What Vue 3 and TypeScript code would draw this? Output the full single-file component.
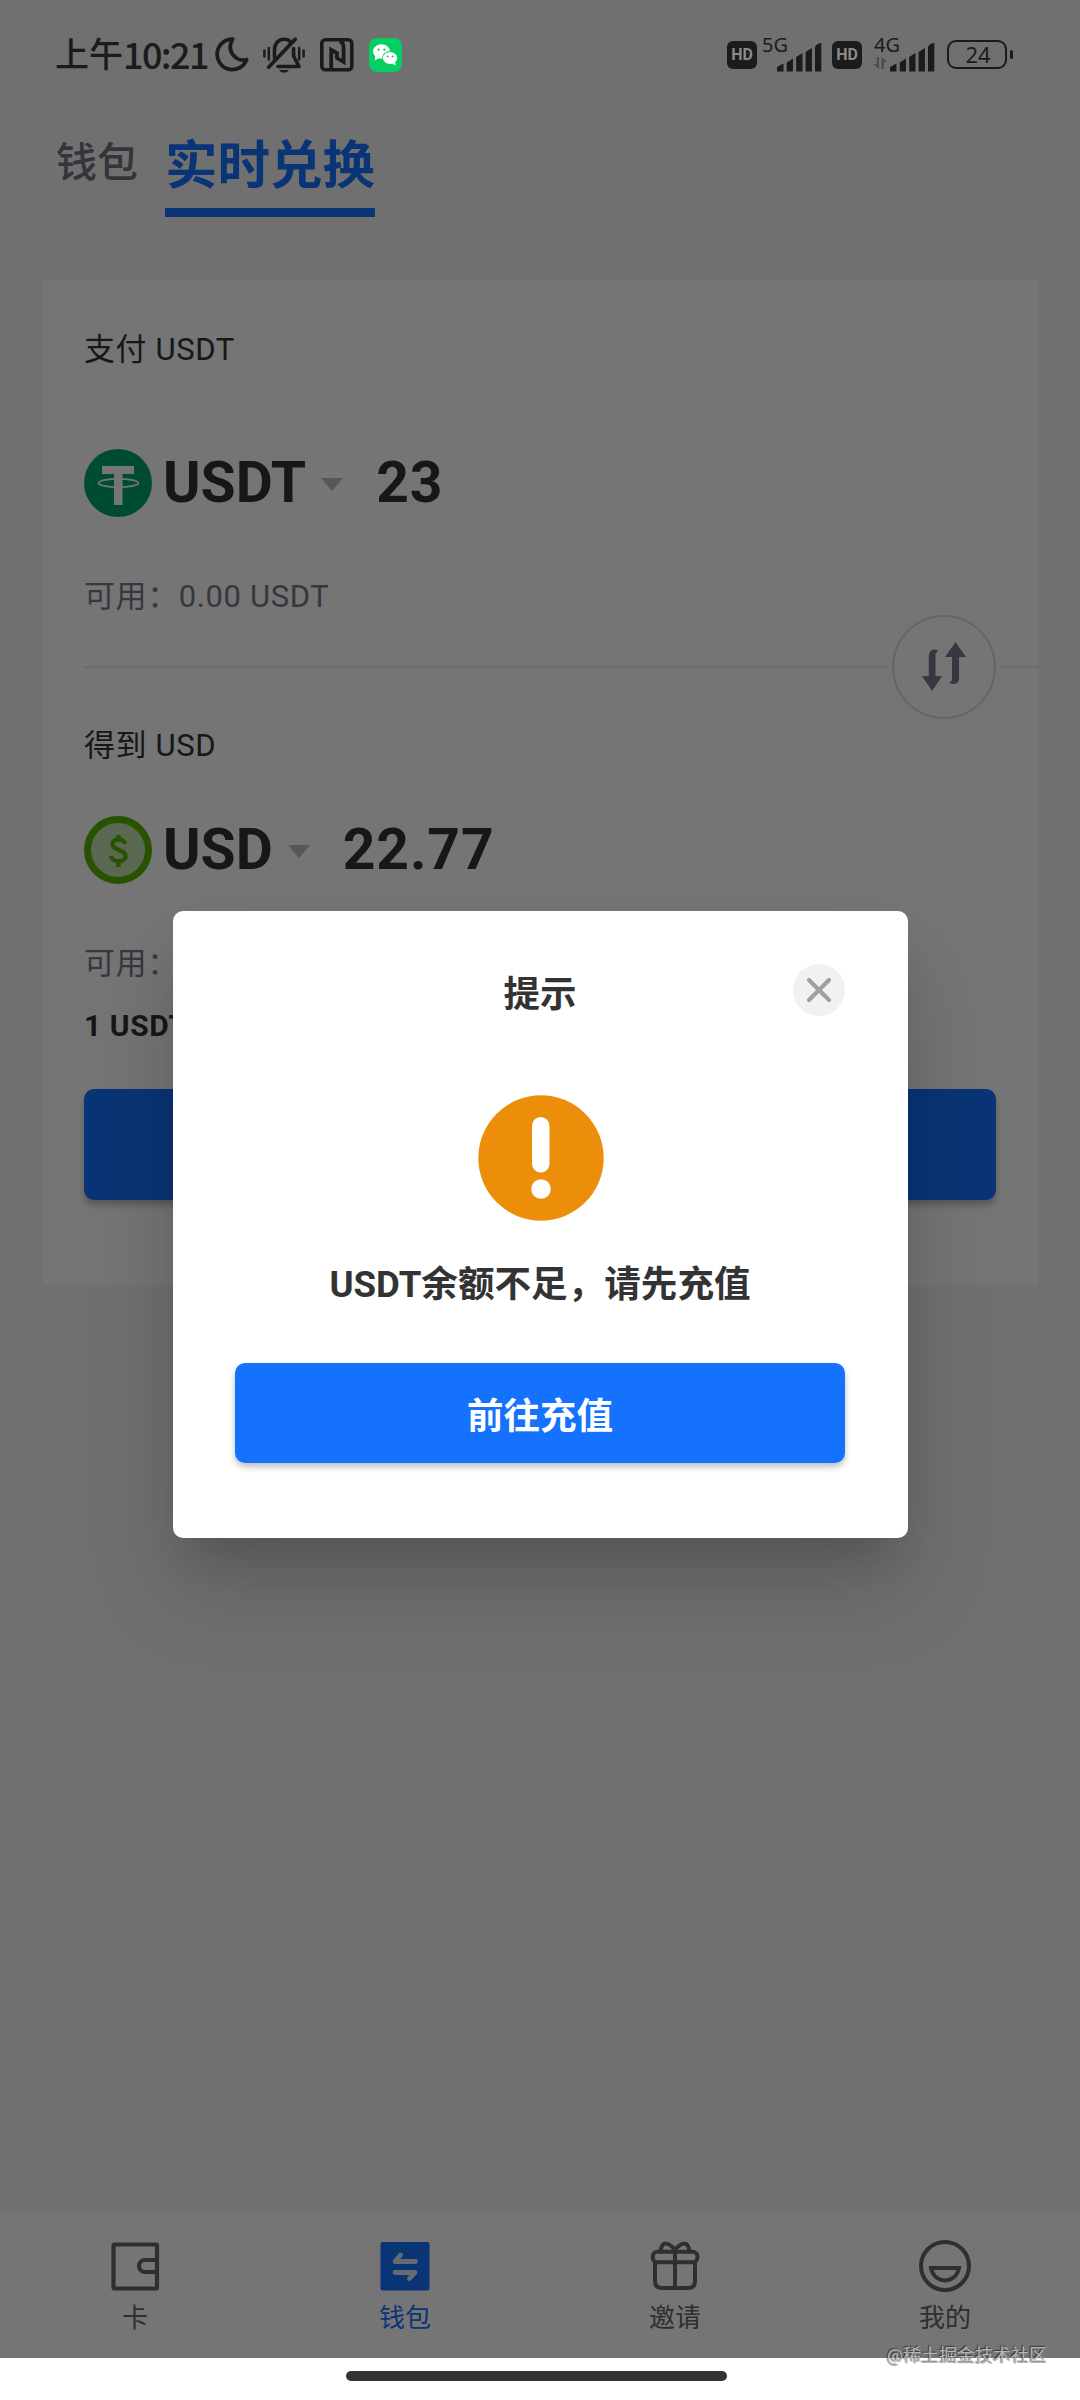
<script setup lang="ts">
import { ref } from 'vue'

type NavIcon = 'card' | 'wallet' | 'gift' | 'mine'

interface NavItem {
  icon: NavIcon
  label: string
}

const navItems: NavItem[] = [
  { icon: 'card', label: '卡' },
  { icon: 'wallet', label: '钱包' },
  { icon: 'gift', label: '邀请' },
  { icon: 'mine', label: '我的' },
]

const activeNav = ref<NavIcon>('wallet')
const dialogOpen = ref(true)
</script>

<template>
  <div class="screen">
    <header class="status">
      <div class="status-left">
        <span class="clock"><span class="clock-cjk">上午</span><span class="clock-num">10:21</span></span>
        <svg class="moon" width="34" height="36" viewBox="0 0 34 36">
          <path d="M17.6 2.2 A15.2 15.2 0 1 0 31.6 22.6 C22 25.5 10.5 15 17.6 2.2 Z" fill="none" stroke="#1b1b1b" stroke-width="3.8" stroke-linejoin="round" />
        </svg>
        <svg class="bell" width="42" height="38" viewBox="0 0 42 38" fill="none" stroke="#1b1b1b" stroke-linecap="round">
          <path d="M11.5 22 V14 C11.5 7 16 3.3 21 3.3 C24 3.3 26.5 4.6 28 6.2 M30.6 12.5 V20 L36 30.5 H15" stroke-width="3.6" stroke-linejoin="round" />
          <path d="M5.8 31 L32.2 3.2" stroke-width="3.8" />
          <path d="M1.4 14.5 V20.5 M5.8 12 V23.5 M36.2 12 V23.5 M40.6 14.5 V20.5" stroke-width="2.5" />
          <path d="M16 34 H26 C24 37.4 18 37.4 16 34 Z" fill="#1b1b1b" stroke="none" />
        </svg>
        <svg class="nfc" width="34" height="34" viewBox="0 0 34 34" fill="none" stroke="#1b1b1b">
          <rect x="1.8" y="1.8" width="30" height="30" rx="3.5" stroke-width="3.6" />
          <path d="M11.2 31 V11.8 L17 15.2 V20 L23.6 24 V10 Q23.6 4 19.5 3.5" stroke-width="3.8" stroke-linejoin="miter" />
        </svg>
        <svg class="wechat" width="33" height="34" viewBox="0 0 33 34">
          <rect width="33" height="34" rx="8" fill="#05cf62" />
          <ellipse cx="12.5" cy="13.5" rx="8.4" ry="7.3" fill="#fff" />
          <path d="M6.5 17 L5.8 22.5 L11 19.5 Z" fill="#fff" />
          <ellipse cx="21" cy="20" rx="8" ry="7" fill="#05cf62" />
          <ellipse cx="21" cy="20" rx="7.2" ry="6.1" fill="#fff" />
          <path d="M22 25 L26.7 27.4 L26 22.5 Z" fill="#fff" />
          <g fill="#05b758">
            <circle cx="9.6" cy="11.6" r="1.1" /><circle cx="15.4" cy="11.6" r="1.1" />
            <circle cx="18.6" cy="18.4" r=".9" /><circle cx="23.6" cy="18.4" r=".9" />
          </g>
        </svg>
      </div>
      <div class="status-right">
        <span class="hd">HD</span>
        <div class="signal first">
          <span class="net">5G</span>
          <svg class="bars" width="46" height="30" viewBox="0 0 46 30" fill="#1b1b1b">
            <path d="M0 25 L6.5 21.5 V29.5 H0Z M9.7 20.5 L16 16.5 V29.5 H9.7Z M19.2 15 L25.5 11 V29.5 H19.2Z M28.6 10 L34.9 6 V29.5 H28.6Z M38 5 Q39 2 44.3 .8 V29.5 H38Z" />
          </svg>
        </div>
        <span class="hd">HD</span>
        <div class="signal second">
          <span class="net">4G</span>
          <svg class="updown" width="15" height="12" viewBox="0 0 15 12" fill="#4c4c4c">
            <path d="M6 0 V12 L.5 7 H3.8 V0Z M8.5 12 V0 L14.5 5 H10.8 V12Z" />
          </svg>
          <svg class="bars" width="46" height="30" viewBox="0 0 46 30" fill="#1b1b1b">
            <path d="M0 25 L6.5 21.5 V29.5 H0Z M9.7 20.5 L16 16.5 V29.5 H9.7Z M19.2 15 L25.5 11 V29.5 H19.2Z M28.6 10 L34.9 6 V29.5 H28.6Z M38 5 Q39 2 44.3 .8 V29.5 H38Z" />
          </svg>
        </div>
        <span class="battery">24</span>
        <span class="battery-nub"></span>
      </div>
    </header>

    <main class="page">
      <nav class="tabs">
        <span class="tab">钱包</span>
        <span class="tab active">实时兑换</span>
      </nav>

      <section class="card">
        <div class="line">支付 USDT</div>
        <div class="amount">
          <svg width="68" height="68" viewBox="0 0 68 68">
            <circle cx="34" cy="34" r="34" fill="#00a36f" />
            <path d="M18 17 H50 V25 H38.5 V56 H30 V25 H18 Z" fill="#fff" />
            <ellipse cx="34.5" cy="34" rx="20" ry="4.2" fill="none" stroke="#fff" stroke-width="1.8" />
          </svg>
          <span class="code">USDT</span>
          <span class="caret"></span>
          <span class="value">23</span>
        </div>
        <div class="line muted after-pay">可用：0.00 USDT</div>

        <div class="divider">
          <button class="swap" type="button" aria-label="swap">
            <svg width="44" height="50" viewBox="0 0 44 50" fill="#767b8e">
              <path d="M16 8 Q15 10.5 13.5 12 V34 H20 L10.2 49 L0 34 H6.8 V14 Q6.8 8 12 7.5Z" />
              <path d="M33.5 0 L44 15 H37 V36 Q37 42 31.5 42 Q29 42 27.5 40.5 Q30 39.5 30 37 V15 H23Z" />
            </svg>
          </button>
        </div>

        <div class="line get">得到 USD</div>
        <div class="amount second-amount">
          <svg width="68" height="68" viewBox="0 0 68 68">
            <circle cx="34" cy="34" r="30.5" fill="#c5e3b4" stroke="#56b400" stroke-width="7" />
            <path d="M41 28 C40 22 28 22 28.500 28.500 C29 35 41.500 33 41.500 40 C41.500 47 28 47 27 40 M34.500 19 V24 M34.500 44 V51" fill="none" stroke="#56b400" stroke-width="4.400" />
          </svg>
          <span class="code">USD</span>
          <span class="caret"></span>
          <span class="value">22.77</span>
        </div>
        <div class="line muted after-get">可用：0.00 USD</div>
        <div class="line rate">1 USDT = 0.99 USD</div>
        <button class="primary exchange" type="button">兑换</button>
      </section>
    </main>

    <footer class="nav">
      <div v-for="item in navItems" :key="item.icon" class="nav-item" :class="{ on: item.icon === activeNav }">
        <svg v-if="item.icon === 'card'" width="54" height="54" viewBox="0 0 54 54" fill="none" stroke="currentColor" stroke-width="4.200">
          <rect x="5.500" y="5.500" width="43.500" height="44" rx="1" />
          <path d="M48 21 H37 A6 6 0 0 0 37 33 H48" />
        </svg>
        <svg v-else-if="item.icon === 'wallet'" width="54" height="54" viewBox="0 0 54 54">
          <rect x="2.500" y="3" width="49" height="48.500" rx="2" fill="#1472ff" />
          <path d="M37.500 22.500 H17 L22.500 16 M17 33.500 H37 L31.500 39.500" fill="none" stroke="#dfe9fb" stroke-width="4.800" stroke-linecap="round" stroke-linejoin="round" />
        </svg>
        <svg v-else-if="item.icon === 'gift'" width="54" height="54" viewBox="0 0 54 54" fill="none" stroke="currentColor" stroke-width="4">
          <rect x="4.800" y="12.800" width="44.600" height="10.400" rx="4.500" />
          <path d="M7 23 V42 Q7 49 14 49 H40 Q47 49 47 42 V23 M27 10 V49 M12.500 12.500 C14 1 20 3.500 27 10.500 C34 3.500 40 1 41.500 12.500" />
        </svg>
        <svg v-else width="54" height="54" viewBox="0 0 54 54" fill="none" stroke="currentColor" stroke-width="4">
          <circle cx="27" cy="27" r="24" />
          <path d="M13 29 H41 C38 45.500 16 45.500 13 29 Z" />
        </svg>
        <span>{{ item.label }}</span>
      </div>
    </footer>

    <div v-if="dialogOpen" class="mask">
      <div class="dialog">
        <div class="dialog-head">
          <h2>提示</h2>
          <button class="close" type="button" aria-label="close" @click="dialogOpen = false">
            <svg width="26" height="26" viewBox="0 0 26 26">
              <path d="M3 3 L23 23 M23 3 L3 23" stroke="#a0a0a0" stroke-width="4.200" stroke-linecap="round" />
            </svg>
          </button>
        </div>
        <svg class="warn" width="126" height="126" viewBox="0 0 126 126">
          <circle cx="63" cy="63" r="62.700" fill="#ed8e0b" />
          <rect x="54" y="22" width="17.500" height="55.500" rx="8.700" fill="#fff" />
          <circle cx="63" cy="94" r="9.800" fill="#fff" />
        </svg>
        <p class="message">USDT余额不足，请先充值</p>
        <button class="primary recharge" type="button">前往充值</button>
      </div>
    </div>

    <div class="home"><span class="home-bar"></span></div>
    <span class="watermark">@稀土掘金技术社区</span>
  </div>
</template>

<style>
body {
  margin: 0;
}
</style>

<style scoped>
.screen {
  position: relative;
  width: 1080px;
  height: 2400px;
  display: flex;
  flex-direction: column;
  overflow: hidden;
  background: #f4f4f4;
  color: #333;
  font-family: Roboto, "Noto Sans CJK SC", sans-serif;
}
button {
  border: 0;
  padding: 0;
  font: inherit;
}
svg {
  display: block;
  flex: none;
}
.status {
  position: relative;
  z-index: 2;
  height: 109px;
  box-sizing: border-box;
  padding: 0 67px 0 55px;
  display: flex;
  justify-content: space-between;
  align-items: center;
  color: #1b1b1b;
}
.status-left,
.status-right {
  display: flex;
  align-items: center;
}
.clock {
  display: flex;
  width: 160px;
  font-family: "Noto Sans CJK SC", sans-serif;
  font-weight: 500;
  font-size: 34px;
  line-height: 40px;
  margin-top: -3px;
  white-space: nowrap;
}
.clock-cjk {
  width: 68px;
}
.clock-num {
  font-size: 36px;
  letter-spacing: -1.6px;
}
.bell {
  margin-left: 14px;
}
.nfc {
  margin-left: 15px;
}
.wechat {
  margin-left: 15px;
}
.hd {
  width: 30px;
  height: 28px;
  border-radius: 6px;
  background: #1b1b1b;
  color: #8a8a8a;
  font: 700 16px/28px Roboto, sans-serif;
  text-align: center;
}
.signal {
  position: relative;
  height: 34px;
  display: flex;
  align-items: flex-end;
  justify-content: flex-end;
}
.signal.first {
  width: 66px;
  margin-right: 9px;
}
.signal.second {
  width: 74px;
  margin-right: 11px;
}
.net {
  position: absolute;
  top: -3px;
  left: 5px;
  font: 400 20px/20px "Noto Sans", sans-serif;
}
.second .net {
  left: 12px;
}
.updown {
  margin: 0 2px 3px 0;
}
.battery {
  width: 60px;
  height: 29px;
  box-sizing: border-box;
  border: 2.5px solid #1b1b1b;
  border-radius: 9px;
  font: 400 22px/24px "Noto Sans", sans-serif;
  text-align: center;
  padding-left: 2px;
}
.battery-nub {
  width: 3.5px;
  height: 9px;
  margin-left: 2.5px;
  border-radius: 2px;
  background: #1b1b1b;
}
.page {
  flex: 1;
  padding-top: 14px;
}
.tabs {
  display: flex;
  align-items: flex-start;
  height: 157px;
  padding-left: 56px;
}
.tab {
  font-size: 41px;
  line-height: 80px;
  color: #75717f;
  font-weight: 500;
  margin-right: 27px;
}
.tab.active {
  font-size: 52.5px;
  line-height: 87px;
  height: 85px;
  font-weight: 700;
  color: #1472ff;
  border-bottom: 9px solid #1472ff;
}
.card {
  margin: 0 42px 0 43px;
  padding: 50px 42px 85px 41px;
  background: #fff;
}
.line {
  font-size: 31px;
  line-height: 39px;
  letter-spacing: 0.6px;
  white-space: nowrap;
}
.muted {
  color: #7b7989;
}
.amount {
  display: flex;
  align-items: center;
  height: 68px;
  margin-top: 80px;
  font-size: 57px;
  font-weight: 700;
  line-height: 68px;
}
.code {
  margin-left: 11px;
}
.value {
  letter-spacing: 0.9px;
}
.caret {
  width: 0;
  margin: 3px 33px 0 15px;
  border: 11px solid transparent;
  border-top: 13px solid #bdbdbd;
  border-bottom: 0;
}
.after-pay {
  margin-top: 60px;
}
.divider {
  position: relative;
  height: 2px;
  margin: 50px -42px 0 0;
  background: #ebebeb;
}
.swap {
  position: absolute;
  right: 42px;
  top: -51px;
  width: 104px;
  height: 104px;
  box-sizing: border-box;
  border: 2px solid #dcdcdc;
  border-radius: 50%;
  background: #fff;
  box-shadow: 0 0 0 6px #fff;
  display: flex;
  align-items: center;
  justify-content: center;
}
.get {
  margin-top: 58px;
}
.second-amount {
  margin-top: 51px;
}
.after-get {
  margin-top: 60px;
}
.rate {
  margin-top: 23px;
  font-size: 30px;
  font-weight: 700;
}
.primary {
  display: block;
  border-radius: 10px;
  background: #1472ff;
  color: #fff;
  font-size: 36.5px;
  font-weight: 700;
  text-align: center;
}
.exchange {
  width: 100%;
  height: 111px;
  margin-top: 44px;
  box-shadow: 0 5px 6px rgba(0, 0, 0, 0.25);
}
.nav {
  height: 147px;
  display: flex;
  background: #fff;
}
.nav-item {
  flex: 1;
  display: flex;
  flex-direction: column;
  align-items: center;
  padding-top: 28px;
  color: #666;
  font-size: 26px;
  line-height: 40px;
}
.nav-item svg {
  margin-bottom: 5px;
}
.nav-item.on {
  color: #1472ff;
}
.mask {
  position: absolute;
  top: 0;
  left: 0;
  width: 1080px;
  height: 2358px;
  box-sizing: border-box;
  padding-top: 91px;
  display: flex;
  align-items: center;
  justify-content: center;
  background: rgba(0, 0, 0, 0.54);
}
.dialog {
  width: 735px;
  height: 627px;
  box-sizing: border-box;
  padding: 52px 62.5px 0;
  border-radius: 10px;
  background: #fff;
  box-shadow: 0 30px 41px -19px rgba(0, 0, 0, 0.14), 0 50px 90px 2px rgba(0, 0, 0, 0.16);
}
.dialog-head {
  display: flex;
  justify-content: flex-end;
  align-items: center;
  height: 54px;
}
.dialog-head h2 {
  flex: 1;
  margin: 9px 0 0 52px;
  font-size: 36.5px;
  line-height: 54px;
  font-weight: 700;
  text-align: center;
}
.close {
  width: 52px;
  height: 52px;
  border-radius: 50%;
  background: #f1f1f1;
  display: flex;
  align-items: center;
  justify-content: center;
}
.warn {
  margin: 78px 0 0 243px;
}
.message {
  margin: 38px 0 0;
  font-size: 36.6px;
  font-weight: 700;
  line-height: 52px;
  text-align: center;
  white-space: nowrap;
}
.recharge {
  width: 610px;
  height: 100px;
  margin-top: 52px;
  box-shadow: 0 4px 6px rgba(0, 0, 0, 0.25);
}
.home {
  position: relative;
  height: 42px;
  display: flex;
  justify-content: center;
  align-items: flex-start;
  background: #fff;
}
.home-bar {
  width: 381px;
  height: 10px;
  margin: 13px 7px 0 0;
  border-radius: 5px;
  background: #333;
}
.watermark {
  position: absolute;
  right: 33px;
  bottom: 31px;
  font-size: 18px;
  line-height: 26px;
  color: #b5b5b5;
  text-shadow: -1px -1px 1px rgba(0, 0, 0, 0.55);
}
</style>
